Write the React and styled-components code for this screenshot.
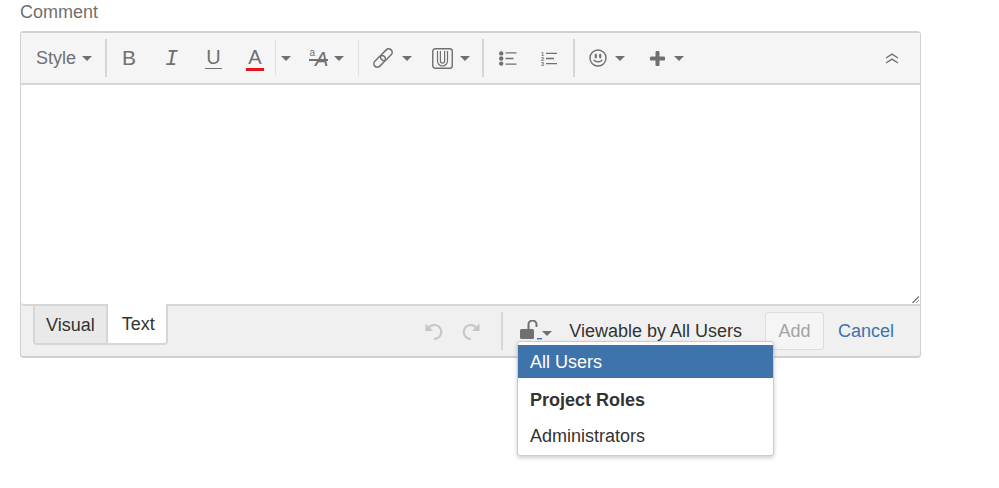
import React from "react";
import styled, { createGlobalStyle } from "styled-components";

const GlobalStyle = createGlobalStyle`
	html, body {
		margin: 0;
		padding: 0;
		background: #fff;
		font-family: "Liberation Sans", Arial, sans-serif;
	}
`;

const Caret = styled.i`
	display: block;
	flex: none;
	width: 0;
	height: 0;
	margin-left: ${(p) => p.$gap || 0}px;
	border-left: 5px solid transparent;
	border-right: 5px solid transparent;
	border-top: 5px solid #707070;
`;

const Icon = ({ w = 20, h = 20, children }) => (
	<svg width={w} height={h} viewBox={`0 0 ${w} ${h}`} fill="none" style={{ display: "block", flex: "none" }}>
		{children}
	</svg>
);

const LinkIcon = () => (
	<Icon w={22} h={22}>
		<g stroke="#707070" strokeWidth="1.5" transform="rotate(-45 11 11)">
			<rect x="-0.5" y="7.5" width="13.5" height="7" rx="3.5" />
			<rect x="9" y="7.5" width="13.5" height="7" rx="3.5" />
		</g>
	</Icon>
);

const AttachIcon = () => (
	<Icon w={21} h={21}>
		<rect x="0.75" y="0.75" width="19.5" height="19.5" rx="2.5" stroke="#707070" strokeWidth="1.4" />
		<path
			d="M5.5 3v10a5 5 0 0 0 10 0V3M8.4 3v10a2.1 2.1 0 0 0 4.2 0V3"
			stroke="#707070"
			strokeWidth="1.2"
		/>
	</Icon>
);

const BulletIcon = () => (
	<Icon w={18} h={15}>
		<circle cx="2.2" cy="2.4" r="2.2" fill="#707070" />
		<circle cx="2.2" cy="7.5" r="2.2" fill="#707070" />
		<circle cx="2.2" cy="12.6" r="2.2" fill="#707070" />
		<path d="M6.5 1.8h11M6.5 7.5h8M6.5 13.2h11" stroke="#707070" strokeWidth="1.3" />
	</Icon>
);

const NumberIcon = () => (
	<Icon w={17} h={15}>
		<text x="0" y="4.5" fontSize="5.5" fontWeight="700" fill="#707070" fontFamily="Liberation Sans">1</text>
		<text x="0" y="9.5" fontSize="5.5" fontWeight="700" fill="#707070" fontFamily="Liberation Sans">2</text>
		<text x="0" y="14.5" fontSize="5.5" fontWeight="700" fill="#707070" fontFamily="Liberation Sans">3</text>
		<path d="M5 2.3h11M5 7.5h8M5 12.7h11" stroke="#707070" strokeWidth="1.3" />
	</Icon>
);

const SmileIcon = () => (
	<Icon w={18} h={18}>
		<circle cx="9" cy="9" r="8" stroke="#707070" strokeWidth="1.4" />
		<rect x="5.7" y="4.8" width="2.2" height="4.6" rx="1.1" fill="#707070" />
		<rect x="10.1" y="4.8" width="2.2" height="4.6" rx="1.1" fill="#707070" />
		<path d="M4.8 10.8c1 2.6 7.4 2.6 8.4 0" stroke="#707070" strokeWidth="1.3" />
	</Icon>
);

const PlusIcon = () => (
	<Icon w={15} h={15}>
		<path d="M7.5 1.5v12M1.5 7.5h12" stroke="#707070" strokeWidth="4" strokeLinecap="round" />
	</Icon>
);

const CollapseIcon = () => (
	<Icon w={14} h={11}>
		<path d="M1 5 7 1.2 13 5M1 10 7 6.2 13 10" stroke="#707070" strokeWidth="1.4" />
	</Icon>
);

const UndoIcon = ({ flip }) => (
	<Icon w={20} h={20}>
		<g transform={flip ? "matrix(-1 0 0 1 20 0)" : undefined}>
			<path d="M4.5 7a7 7 0 1 1 5.5 11" stroke="#c6c6c6" strokeWidth="2" />
			<path d="M1.5 2.5v7.5h7.5z" fill="#c6c6c6" />
		</g>
	</Icon>
);

const LockIcon = () => (
	<Icon w={22} h={22}>
		<rect x="0" y="9" width="14" height="10" rx="1.5" fill="#707070" />
		<path d="M8.5 9V4.5a4 4 0 0 1 8 0V7" stroke="#707070" strokeWidth="2" />
		<rect x="17" y="18" width="5" height="1.4" fill="#3b73af" />
	</Icon>
);

export default function App() {
	return (
		<Page>
			<GlobalStyle />
			<Label>Comment</Label>
			<Editor>
				<Toolbar>
					<ToolButton $w={79} $pr={3}>
						<StyleText>Style</StyleText>
						<Caret $gap={6} />
					</ToolButton>
					<Divider />
					<ToolButton $w={44}>
						<Glyph>B</Glyph>
					</ToolButton>
					<ToolButton $w={41}>
						<SlabGlyph>I</SlabGlyph>
					</ToolButton>
					<ToolButton $w={43}>
						<UnderlineGlyph>U</UnderlineGlyph>
					</ToolButton>
					<ToolButton $w={40}>
						<ColorGlyph>A</ColorGlyph>
					</ToolButton>
					<Divider $thin />
					<ToolButton $w={20}>
						<Caret />
					</ToolButton>
					<ToolButton $w={62}>
						<ClearGlyph>
							<sup>a</sup>
							<em>A</em>
						</ClearGlyph>
						<Caret $gap={6} />
					</ToolButton>
					<Divider $thin />
					<ToolButton $w={65}>
						<LinkIcon />
						<Caret $gap={8} />
					</ToolButton>
					<ToolButton $w={58} $pr={4}>
						<AttachIcon />
						<Caret $gap={7} />
					</ToolButton>
					<Divider />
					<ToolButton $w={48}>
						<BulletIcon />
					</ToolButton>
					<ToolButton $w={41} $pr={7}>
						<NumberIcon />
					</ToolButton>
					<Divider />
					<ToolButton $w={64}>
						<SmileIcon />
						<Caret $gap={8} />
					</ToolButton>
					<ToolButton $w={56}>
						<PlusIcon />
						<Caret $gap={9} />
					</ToolButton>
					<CollapseButton>
						<CollapseIcon />
					</CollapseButton>
				</Toolbar>
				<TextArea>
					<Grip />
				</TextArea>
				<Footer>
					<Tabs>
						<Tab>Visual</Tab>
						<Tab $active>Text</Tab>
					</Tabs>
					<Actions>
						<UndoGroup>
							<UndoIcon />
							<UndoIcon flip />
						</UndoGroup>
						<FooterDivider />
						<LockButton>
							<LockIcon />
							<Caret />
						</LockButton>
						<Viewable>Viewable by All Users</Viewable>
						<AddButton>Add</AddButton>
						<CancelLink>Cancel</CancelLink>
					</Actions>
					<Menu>
						<MenuItem $selected>All Users</MenuItem>
						<MenuHeading>Project Roles</MenuHeading>
						<MenuItem>Administrators</MenuItem>
					</Menu>
				</Footer>
			</Editor>
		</Page>
	);
}

const Page = styled.div`
	width: 999px;
	height: 488px;
	padding: 2px 0 0 20px;
	box-sizing: border-box;
	overflow: hidden;
`;

const Label = styled.div`
	height: 21px;
	margin-bottom: 8px;
	font-size: 18px;
	line-height: 21px;
	color: #707070;
`;

const Editor = styled.div`
	width: 901px;
	height: 327px;
	box-sizing: border-box;
	display: flex;
	flex-direction: column;
	border: 2px solid #d6d6d6;
	border-left-width: 1px;
	border-right-width: 1px;
	border-color: #d0d0d0;
	border-radius: 4px;
	background: #f0f0f0;
`;

const Toolbar = styled.div`
	display: flex;
	align-items: center;
	height: 50px;
	flex: none;
	padding-left: 5px;
	background: #f5f5f5;
	border-bottom: 2px solid #d6d6d6;
`;

const ToolButton = styled.div`
	display: flex;
	align-items: center;
	justify-content: center;
	flex: none;
	box-sizing: border-box;
	width: ${(p) => p.$w}px;
	height: 100%;
	padding-right: ${(p) => p.$pr || 0}px;
`;

const Divider = styled.div`
	flex: none;
	width: ${(p) => (p.$thin ? 1 : 2)}px;
	height: ${(p) => (p.$thin ? 36 : 38)}px;
	background: ${(p) => (p.$thin ? "#e0e0e0" : "#d6d6d6")};
`;

const CollapseButton = styled.div`
	display: flex;
	margin-left: auto;
	margin-right: 21px;
`;

const StyleText = styled.span`
	font-size: 18px;
	color: #707070;
`;

const Glyph = styled.span`
	font-size: 21px;
	line-height: 24px;
	color: #707070;
`;

const SlabGlyph = styled(Glyph)`
	font-family: "Liberation Mono", monospace;
	font-style: italic;
	font-size: 22px;
	margin-top: 4px;
`;

const UnderlineGlyph = styled(Glyph)`
	font-size: 20px;
	border-bottom: 1.5px solid #707070;
	line-height: 21px;
	padding: 0 1px;
`;

const ColorGlyph = styled(Glyph)`
	font-size: 20px;
	line-height: 22px;
	padding: 0 2px;
	border-bottom: 3px solid #e5131a;
	margin-top: 1px;
`;

const ClearGlyph = styled.span`
	position: relative;
	display: flex;
	align-items: flex-start;
	color: #707070;

	sup {
		font-size: 10px;
		line-height: 10px;
		margin-top: 2px;
	}

	em {
		font-size: 20px;
		line-height: 22px;
		margin-top: 2px;
		position: relative;
	}

	em::after {
		content: "";
		position: absolute;
		left: -6px;
		right: 0;
		top: 11px;
		height: 1.5px;
		background: #707070;
	}
`;

const TextArea = styled.div`
	position: relative;
	flex: none;
	height: 219px;
	background: #fff;
	border-bottom: 2px solid #d6d6d6;
	border-radius: 0 0 0 4px;
`;

const Grip = styled.div`
	position: absolute;
	right: 1px;
	bottom: 1px;
	width: 7px;
	height: 7px;
	background: linear-gradient(
		135deg,
		transparent 48%,
		#8a8a8a 48%,
		#8a8a8a 58%,
		transparent 58%,
		transparent 74%,
		#8a8a8a 74%,
		#8a8a8a 84%,
		transparent 84%
	);
`;

const Footer = styled.div`
	position: relative;
	flex: 1;
	display: flex;
	justify-content: space-between;
	align-items: flex-start;
	padding-left: 12px;
`;

const Tabs = styled.div`
	display: flex;
	margin-top: -2px;
	border: 2px solid #d6d6d6;
	border-top: none;
	border-radius: 0 0 4px 4px;
	overflow: hidden;
`;

const Tab = styled.div`
	box-sizing: content-box;
	height: ${(p) => (p.$active ? 39 : 37)}px;
	line-height: ${(p) => (p.$active ? 41 : 39)}px;
	padding: ${(p) => (p.$active ? "0 11px 0 14px" : "0 11px")};
	font-size: 18px;
	color: #333;
	background: ${(p) => (p.$active ? "#fff" : "#e9e9e9")};
	border-top: ${(p) => (p.$active ? "none" : "2px solid #d6d6d6")};
	border-right: ${(p) => (p.$active ? "none" : "2px solid #d6d6d6")};
`;

const Actions = styled.div`
	display: flex;
	align-items: center;
	height: 38px;
	margin-top: 6px;
	padding-right: 26px;
`;

const UndoGroup = styled.div`
	display: flex;
	gap: 17px;
	margin-right: 20px;
`;

const FooterDivider = styled.div`
	width: 2px;
	height: 38px;
	background: #d6d6d6;
	margin-right: 17px;
`;

const LockButton = styled.div`
	display: flex;
	align-items: center;
	margin-right: 17px;

	> i {
		margin-top: 5px;
	}
`;

const Viewable = styled.span`
	font-size: 18px;
	color: #333;
	margin-right: 23px;
`;

const AddButton = styled.div`
	width: 59px;
	height: 38px;
	box-sizing: border-box;
	border: 1px solid #dcdcdc;
	border-radius: 3px;
	background: #f5f5f5;
	color: #a3a3a3;
	font-size: 18px;
	line-height: 36px;
	text-align: center;
	margin-right: 14px;
`;

const CancelLink = styled.a`
	font-size: 18px;
	color: #3b73af;
`;

const Menu = styled.div`
	position: absolute;
	left: 496px;
	top: 35px;
	width: 257px;
	height: 115px;
	box-sizing: border-box;
	padding-top: 3px;
	background: #fff;
	border: 1px solid #ccc;
	border-radius: 3px;
	box-shadow: 0 2px 4px rgba(0, 0, 0, 0.2);
	z-index: 2;
`;

const MenuItem = styled.div`
	height: 33px;
	line-height: 35px;
	padding-left: 12px;
	font-size: 18px;
	color: ${(p) => (p.$selected ? "#fff" : "#333")};
	background: ${(p) => (p.$selected ? "#3f73ab" : "transparent")};
`;

const MenuHeading = styled.div`
	height: 41px;
	line-height: 45px;
	padding-left: 12px;
	font-size: 18px;
	font-weight: 700;
	color: #333;
`;
